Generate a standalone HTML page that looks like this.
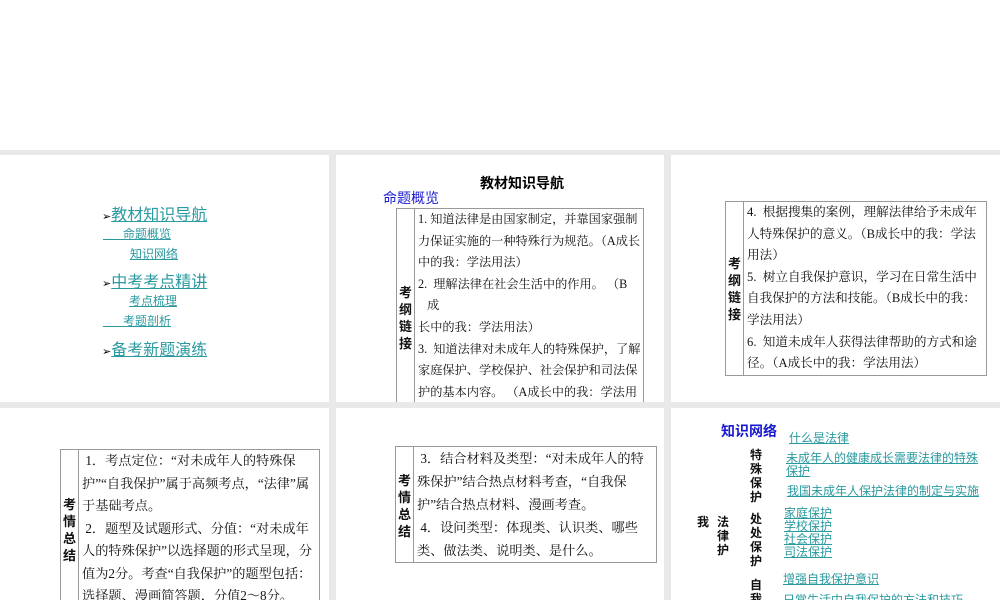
<!DOCTYPE html>
<html><head><meta charset="utf-8"><style>
body{margin:0;width:1000px;height:600px;background:#fff;position:relative;overflow:hidden;font-family:"Liberation Serif","Noto Serif CJK SC",serif;}
.bg{position:absolute;left:0;top:150px;width:1000px;height:450px;background:#e9e9e9}
.p{position:absolute;background:#fff;overflow:hidden}
.a{position:absolute;white-space:nowrap}
.lk{color:#2a9aa0;text-decoration:underline;font-family:"Liberation Sans","Noto Sans CJK SC",sans-serif}
table{position:absolute;border-collapse:collapse;border:1px solid #888;font-size:12.2px;color:#111;font-family:"Liberation Serif","Noto Serif CJK SC",serif}
td{border:1px solid #999;vertical-align:middle;padding:0 2px 0 3px}
td.h{font-weight:bold;font-size:13px;line-height:17px;text-align:center;width:13px;padding:0 2px;font-family:"Noto Sans CJK SC",sans-serif}
td.t{line-height:21.6px;white-space:normal;word-break:break-all}
.b{color:#1a1ad0;font-weight:bold;font-family:"Noto Sans CJK SC",sans-serif}
.v{position:absolute;width:14px;font-size:12px;line-height:14px;font-family:"Noto Sans CJK SC",sans-serif;font-weight:bold;color:#111}
.n{position:absolute;font-size:12px;line-height:13px;white-space:nowrap}
</style></head><body>
<div class="bg"></div>
<div class="p" style="left:0;top:155px;width:329px;height:247px">
 <div class="a" style="left:102px;top:46px;font-size:16px"><span style="font-size:11px">➢</span><span class="lk">教材知识导航</span></div>
 <div class="a lk" style="left:103px;top:70px;font-size:12px">&nbsp;&nbsp;&nbsp;&nbsp;&nbsp;&nbsp;命题概览</div>
 <div class="a lk" style="left:130px;top:90px;font-size:12px">知识网络</div>
 <div class="a" style="left:102px;top:113px;font-size:16px"><span style="font-size:11px">➢</span><span class="lk">中考考点精讲</span></div>
 <div class="a lk" style="left:129px;top:137px;font-size:12px">考点梳理</div>
 <div class="a lk" style="left:103px;top:157px;font-size:12px">&nbsp;&nbsp;&nbsp;&nbsp;&nbsp;&nbsp;考题剖析</div>
 <div class="a" style="left:102px;top:181px;font-size:16px"><span style="font-size:11px">➢</span><span class="lk">备考新题演练</span></div>
</div>
<div class="p" style="left:336px;top:155px;width:328px;height:247px">
 <div class="a" style="left:144px;top:18px;font-size:14px;font-weight:bold;font-family:'Noto Sans CJK SC',sans-serif">教材知识导航</div>
 <div class="a b" style="left:47px;top:33px;font-size:14px;font-weight:normal">命题概览</div>
 <table style="left:60px;top:53px;width:248px"><tr><td class="h">考纲链接</td><td class="t">1. 知道法律是由国家制定，并靠国家强制力保证实施的一种特殊行为规范。（A成长中的我：学法用法）<br>2.&nbsp; 理解法律在社会生活中的作用。 （B<br>&nbsp;&nbsp;&nbsp;成<br>长中的我：学法用法）<br>3.&nbsp; 知道法律对未成年人的特殊保护，了解家庭保护、学校保护、社会保护和司法保护的基本内容。 （A成长中的我：学法用法）</td></tr></table>
</div>
<div class="p" style="left:671px;top:155px;width:329px;height:247px">
 <table style="left:54px;top:46px;width:262px;font-size:12.6px"><tr><td class="h">考纲链接</td><td class="t">4.&nbsp; 根据搜集的案例，理解法律给予未成年人特殊保护的意义。（B成长中的我：学法用法）<br>5.&nbsp; 树立自我保护意识，学习在日常生活中自我保护的方法和技能。（B成长中的我：学法用法）<br>6.&nbsp; 知道未成年人获得法律帮助的方式和途径。（A成长中的我：学法用法）</td></tr></table>
</div>
<div class="p" style="left:0;top:408px;width:329px;height:192px">
 <table style="left:60px;top:41px;width:260px;font-size:13.2px"><tr><td class="h">考情总结</td><td class="t" style="line-height:22.5px">&nbsp;1．考点定位：“对未成年人的特殊保护”“自我保护”属于高频考点，“法律”属于基础考点。<br>&nbsp;2．题型及试题形式、分值：“对未成年人的特殊保护”以选择题的形式呈现，分值为2分。考查“自我保护”的题型包括：选择题、漫画简答题，分值2～8分。</td></tr></table>
</div>
<div class="p" style="left:336px;top:408px;width:328px;height:192px">
 <table style="left:59px;top:38px;width:262px;font-size:13.2px"><tr><td class="h">考情总结</td><td class="t" style="line-height:23px">&nbsp;3．结合材料及类型：“对未成年人的特殊保护”结合热点材料考查，“自我保护”结合热点材料、漫画考查。<br>&nbsp;4．设问类型：体现类、认识类、哪些类、做法类、说明类、是什么。</td></tr></table>
</div>
<div class="p" style="left:671px;top:408px;width:329px;height:192px">
 <div class="a b" style="left:50px;top:13px;font-size:14px">知识网络</div>
 <div class="n lk" style="left:118px;top:24px">什么是法律</div>
 <div class="n lk" style="left:115px;top:44px;width:195px;white-space:normal">未成年人的健康成长需要法律的特殊保护</div>
 <div class="n lk" style="left:116px;top:77px">我国未成年人保护法律的制定与实施</div>
 <div class="n lk" style="left:113px;top:99px">家庭保护<br>学校保护<br>社会保护<br>司法保护</div>
 <div class="n lk" style="left:112px;top:165px">增强自我保护意识</div>
 <div class="n lk" style="left:112px;top:186px">日常生活中自我保护的方法和技巧</div>
 <div class="v" style="left:79px;top:40px">特殊保护</div>
 <div class="v" style="left:79px;top:104px">处处保护</div>
 <div class="v" style="left:79px;top:170px">自我保护</div>
 <div class="v" style="left:46px;top:107px">法律护</div>
 <div class="v" style="left:26px;top:107px">我</div>
</div>
</body></html>
